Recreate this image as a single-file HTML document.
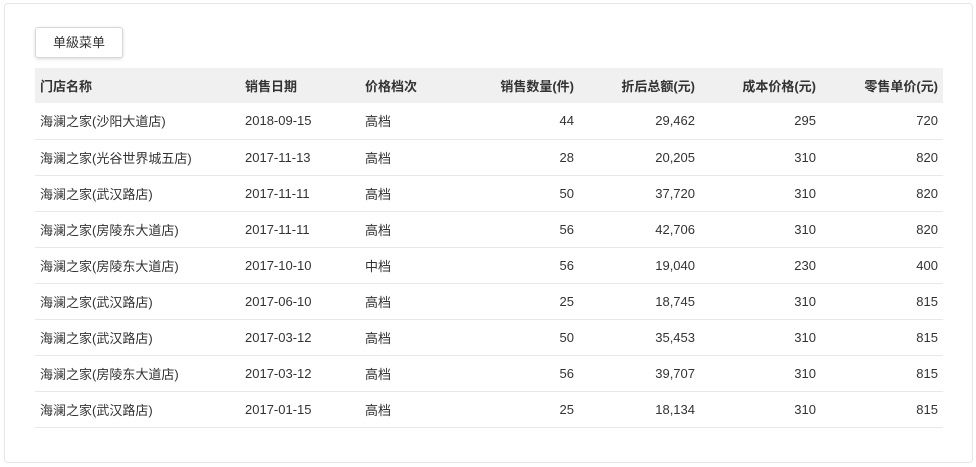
<!DOCTYPE html>
<html><head><meta charset="utf-8"><style>
*{margin:0;padding:0;box-sizing:border-box}
body{width:976px;height:467px;background:#fff;font-family:"Liberation Sans","Noto Sans CJK SC",sans-serif;font-size:13px;color:#333;position:relative;overflow:hidden}
.card{position:absolute;left:4px;top:3px;width:969px;height:460px;border:1px solid #e6e6e6;border-radius:4px}
.btn{position:absolute;left:35px;top:27px;width:88px;height:31px;border:1px solid #d8d8d8;border-radius:3px;box-shadow:0 1px 3px rgba(0,0,0,.15);text-align:center;line-height:29px;font-size:13px;color:#333;background:#fff}
table{position:absolute;left:35px;top:68px;width:908px;border-collapse:collapse}
td,th{height:36px;padding:0 5px;border-bottom:1px solid #e8e8e8;white-space:nowrap}
th{height:35px;background:#f0f0f0;font-weight:bold;text-align:left;border-bottom:none}
.r{text-align:right}
</style></head><body>
<div class="card"></div>
<div class="btn">单級菜单</div>
<table>
<colgroup><col style="width:205px"><col style="width:120px"><col style="width:100px"><col style="width:119px"><col style="width:121px"><col style="width:121px"><col style="width:122px"></colgroup>
<tr><th>门店名称</th><th>销售日期</th><th>价格档次</th><th class="r">销售数量(件)</th><th class="r">折后总额(元)</th><th class="r">成本价格(元)</th><th class="r">零售单价(元)</th></tr>
<tr><td>海澜之家(沙阳大道店)</td><td>2018-09-15</td><td>高档</td><td class="r">44</td><td class="r">29,462</td><td class="r">295</td><td class="r">720</td></tr>
<tr><td>海澜之家(光谷世界城五店)</td><td>2017-11-13</td><td>高档</td><td class="r">28</td><td class="r">20,205</td><td class="r">310</td><td class="r">820</td></tr>
<tr><td>海澜之家(武汉路店)</td><td>2017-11-11</td><td>高档</td><td class="r">50</td><td class="r">37,720</td><td class="r">310</td><td class="r">820</td></tr>
<tr><td>海澜之家(房陵东大道店)</td><td>2017-11-11</td><td>高档</td><td class="r">56</td><td class="r">42,706</td><td class="r">310</td><td class="r">820</td></tr>
<tr><td>海澜之家(房陵东大道店)</td><td>2017-10-10</td><td>中档</td><td class="r">56</td><td class="r">19,040</td><td class="r">230</td><td class="r">400</td></tr>
<tr><td>海澜之家(武汉路店)</td><td>2017-06-10</td><td>高档</td><td class="r">25</td><td class="r">18,745</td><td class="r">310</td><td class="r">815</td></tr>
<tr><td>海澜之家(武汉路店)</td><td>2017-03-12</td><td>高档</td><td class="r">50</td><td class="r">35,453</td><td class="r">310</td><td class="r">815</td></tr>
<tr><td>海澜之家(房陵东大道店)</td><td>2017-03-12</td><td>高档</td><td class="r">56</td><td class="r">39,707</td><td class="r">310</td><td class="r">815</td></tr>
<tr><td>海澜之家(武汉路店)</td><td>2017-01-15</td><td>高档</td><td class="r">25</td><td class="r">18,134</td><td class="r">310</td><td class="r">815</td></tr>
</table>
</body></html>
